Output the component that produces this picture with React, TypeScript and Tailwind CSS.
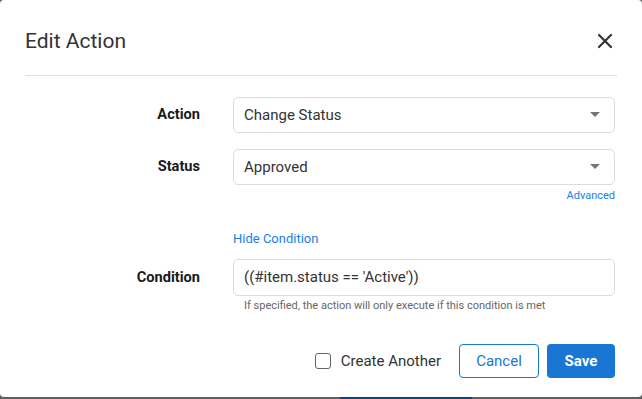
import React, { useState } from "react";
import { X } from "lucide-react";

const font = { fontFamily: "Roboto, 'Liberation Sans', sans-serif" };

const SelectBox = ({ value }: { value: string }) => {
  return (
    <div className="flex items-center justify-between w-[382px] h-[36px] border border-[#dcdcdc] rounded-[5px] pl-[10px] pr-[14px] bg-white">
      <span className="text-[15px] text-[#333]">{value}</span>
      <svg width="10" height="6" viewBox="0 0 10 6">
        <path d="M0 0 L10 0 L5 5 Z" fill="#757575" />
      </svg>
    </div>
  );
};

const FieldLabel = ({ children }: { children: React.ReactNode }) => (
  <div className="w-[200px] text-right text-[14.6px] font-bold text-[#1a1a1a]">{children}</div>
);

export default function App() {
  const [another, setAnother] = useState(false);

  return (
    <div className="w-[642px] h-[399px] bg-[#5f5f5f] overflow-hidden" style={font}>
      <div className="h-[397px] bg-white rounded-[4px] flex flex-col">
        {/* header */}
        <div className="mx-[25px] pt-[28px] pb-[21px] flex items-center justify-between border-b border-[#e0e0e0]">
          <h2 className="text-[21px] leading-[26px] text-[#333]">Edit Action</h2>
          <X size={24} strokeWidth={2.2} color="#333" />
        </div>

        {/* body */}
        <div className="pt-[21px] pr-[27px]">
          <div className="flex items-center">
            <FieldLabel>Action</FieldLabel>
            <div className="ml-[33px]">
              <SelectBox value="Change Status" />
            </div>
          </div>

          <div className="flex items-center mt-[16px]">
            <FieldLabel>Status</FieldLabel>
            <div className="ml-[33px]">
              <SelectBox value="Approved" />
            </div>
          </div>
          <div className="mt-[4px] text-right text-[11px] leading-[14px] text-[#1a7fe6]">Advanced</div>

          <div className="mt-[28px] ml-[233px] text-[13px] leading-[16px] text-[#1a7fe6]">Hide Condition</div>

          <div className="flex items-center mt-[12px]">
            <FieldLabel>Condition</FieldLabel>
            <div className="ml-[33px] w-[382px] h-[37px] flex items-center border border-[#dcdcdc] rounded-[5px] pl-[10px] text-[15px] text-[#333]">
              {"((#item.status == 'Active'))"}
            </div>
          </div>
          <div className="mt-[3px] ml-[244px] text-[11px] leading-[14px] text-[#666]">
            If specified, the action will only execute if this condition is met
          </div>
        </div>

        {/* footer */}
        <div className="mt-[31px] pr-[27px] flex items-center justify-end">
          <label className="flex items-center cursor-pointer" onClick={() => setAnother(!another)}>
            <span className="w-[16px] h-[16px] rounded-[3px] border-[1.5px] border-[#666] bg-white"></span>
            <span className="ml-[10px] text-[15px] text-[#333]">Create Another</span>
          </label>
          <button className="ml-[18px] w-[80px] h-[34px] rounded-[4px] border border-[#1976d2] text-[#1976d2] text-[15px] bg-white">
            Cancel
          </button>
          <button className="ml-[8px] w-[68px] h-[34px] rounded-[4px] bg-[#1976d2] text-white text-[15px] font-bold">
            Save
          </button>
        </div>
      </div>
      <div className="flex h-[2px]">
        <div className="w-[340px] bg-[#5f5f5f]"></div>
        <div className="w-[132px] bg-[#1c3f73]"></div>
      </div>
    </div>
  );
}
